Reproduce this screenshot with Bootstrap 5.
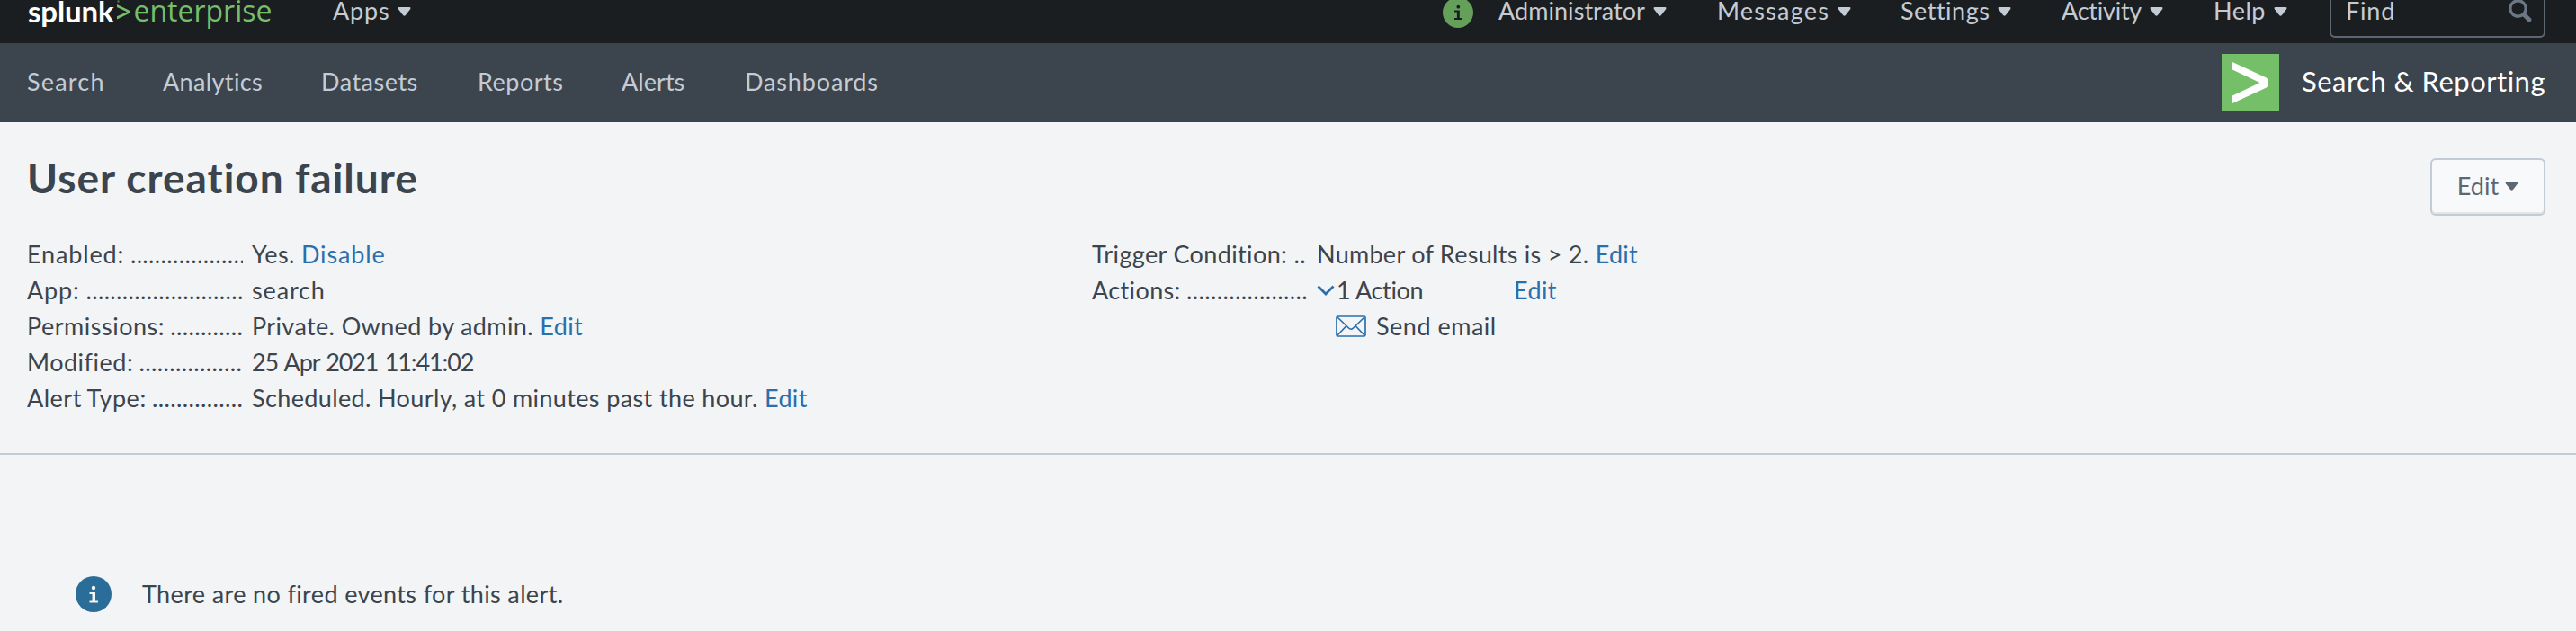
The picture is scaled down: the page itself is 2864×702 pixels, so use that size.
<!DOCTYPE html>
<html lang="en">
<head>
<meta charset="utf-8">
<title>User creation failure | Splunk</title>
<link href="https://cdn.jsdelivr.net/npm/bootstrap@5.3.0/dist/css/bootstrap.min.css" rel="stylesheet">
<style>
body{margin:0;background:#f2f4f5;color:#3c444d;font:27px/40px Lato,"Open Sans",sans-serif;letter-spacing:.37px;font-variant-ligatures:none;font-kerning:normal;height:702px;overflow:hidden;white-space:nowrap}
a{color:#2b6fad;text-decoration:none}
svg{display:block;flex:none}
.top-bar{height:48px;background:#1a1e21;color:#c3cbd4;overflow:hidden;padding:0 34px 0 31px}
.top-bar a,.app-bar nav a{color:#c3cbd4}
.top-line{height:40px;margin-top:-8px}
.logo{width:339px;height:40px;line-height:40px}
.logo b{color:#fff;font:700 33px/40px Lato,sans-serif;letter-spacing:-.15px}
.logo .prompt{width:17px;margin:0 2px 0 3px}
.logo .edition{color:#76bf69;font:400 32px/40px "Open Sans",sans-serif;letter-spacing:0}
.caret{width:15px;height:10px;margin-top:2px;fill:currentColor}
.menu-item{gap:9px}
.menus{display:grid;grid-template:40px / 62px 243px 204px 179px 169px 129px 240px}
.info-dot{margin-top:4px}
.find-box{height:60px;border:2px solid #5c6773;border-radius:6px;padding:0 12px 0 16px;margin:-10px 0}
.app-bar{height:88px;background:#3c444d;padding:0 34px 4px 30px}
.app-bar nav{display:grid;grid-template-columns:151px 176px 174px 160px 137px auto;padding-top:2px}
.app-title{color:#fff;font-size:31px;letter-spacing:.49px}
.app-icon{margin:4px 25px 0 0}
.page-head{padding:34px 34px 0 30px;height:127px}
h1{font:700 46px/56px Lato,sans-serif;letter-spacing:1px;margin:0}
.edit-btn{--bs-btn-color:#5c6773;--bs-btn-bg:#f7f9fa;--bs-btn-border-color:#c3cbd4;width:128px;height:64px;margin-top:6px;padding:0 0 3px;border-width:2px;border-radius:6px;box-shadow:inset 0 -2px #e1e6eb;font-size:27px;line-height:40px;letter-spacing:.1px}
.edit-btn .caret{margin:0 0 0 7px}
.details{border-bottom:2px solid #c3cbd4;height:243px;padding-left:30px}
.detail-list{width:1184px}
.term{width:240px;height:40px;overflow:hidden;margin-right:10px}
.term span{word-spacing:-1px}
.condition{letter-spacing:.28px}
.action-count{width:198px;letter-spacing:-.35px}
.action-count svg{margin-right:2px}
.action-edit{margin-left:21px}
.send-row{padding-left:271px;gap:11px}
.notice{padding:135px 0 0 84px}
.notice svg{margin-right:34px}
.k0{letter-spacing:.05px}.k6{letter-spacing:.5px}.k9{letter-spacing:.85px}.k11{letter-spacing:.8px}.k14{letter-spacing:1.2px}.kn{letter-spacing:-.25px}.kd{letter-spacing:-1.1px;word-spacing:1.500px}
</style>
</head>
<body>
<svg class="d-none"><symbol id="caret" viewBox="0 0 16 10" preserveAspectRatio="none"><path d="M2 0H14Q16.300 .3 15 2.200L9.500 9Q8 10.600 6.500 9L1 2.200Q-.3 .3 2 0Z"/></symbol></svg>
<header class="top-bar d-flex justify-content-between">
  <div class="top-line d-flex align-items-center">
    <a class="logo d-flex align-items-center" href="#"><b>splunk</b><svg class="prompt" height="24" viewBox="0 0 17 24"><path d="M1 5 16 12.200V14.200L1 21.500V18.300L12.200 13.200 1 8.100Z" fill="#76bf69"/><circle cx="2.500" cy="1.500" r="1.200" fill="#4f7f49"/></svg><span class="edition">enterprise</span></a>
    <a class="menu-item d-flex align-items-center k11" href="#">Apps<svg class="caret"><use href="#caret"/></svg></a>
  </div>
  <div class="menus top-line align-items-center">
    <svg class="info-dot" width="34" height="34" viewBox="0 0 34 34"><circle cx="17" cy="17" r="17" fill="#65a05a"/><path d="M13 14.500H18.800V23H21.300V25H13V23H15.900V16.500H13Z" fill="#1a1e21"/><circle cx="17.300" cy="10.700" r="1.900" fill="#1a1e21"/></svg>
    <a class="menu-item d-flex align-items-center k0" href="#">Administrator<svg class="caret"><use href="#caret"/></svg></a>
    <a class="menu-item d-flex align-items-center k14" href="#">Messages<svg class="caret"><use href="#caret"/></svg></a>
    <a class="menu-item d-flex align-items-center k6" href="#">Settings<svg class="caret"><use href="#caret"/></svg></a>
    <a class="menu-item d-flex align-items-center kn" href="#">Activity<svg class="caret"><use href="#caret"/></svg></a>
    <a class="menu-item d-flex align-items-center k6" href="#">Help<svg class="caret"><use href="#caret"/></svg></a>
    <div class="find-box d-flex align-items-center justify-content-between k11"><span>Find</span><svg width="28" height="28" viewBox="0 0 28 28" fill="none" stroke="#6b7785"><circle cx="11.500" cy="11.500" r="8.700" stroke-width="3.400"/><path d="M18.500 18.500 24 24" stroke-width="5" stroke-linecap="round"/></svg></div>
  </div>
</header>
<div class="app-bar d-flex align-items-center justify-content-between">
  <nav><a class="k14" href="#">Search</a><a href="#">Analytics</a><a class="k6" href="#">Datasets</a><a class="k6" href="#">Reports</a><a class="k0" href="#">Alerts</a><a class="k9" href="#">Dashboards</a></nav>
  <div class="app-title d-flex align-items-center"><svg class="app-icon" width="64" height="64" viewBox="0 0 64 64"><path d="M0 0H64V64H0Z" fill="#76bf69"/><path d="M12 9 52 27.500V36.500L12 55V46.500L42.500 32 12 17.500Z" fill="#fff"/></svg>Search &amp; Reporting</div>
</div>
<main>
  <div class="page-head d-flex justify-content-between align-items-start">
    <h1>User creation failure</h1>
    <button class="btn edit-btn d-flex align-items-center justify-content-center">Edit<svg class="caret"><use href="#caret"/></svg></button>
  </div>
  <section class="details d-flex">
    <div class="detail-list">
      <div class="d-flex"><div class="term"><span class="k9">Enabled: </span>...................</div><div>Yes. <a href="#" class="k9">Disable</a></div></div>
      <div class="d-flex"><div class="term"><span class="k9">App: </span>...........................</div><div class="k9">search</div></div>
      <div class="d-flex"><div class="term"><span class="k6">Permissions: </span>............</div><div>Private. Owned by admin. <a href="#">Edit</a></div></div>
      <div class="d-flex"><div class="term"><span class="k6">Modified: </span>..................</div><div class="kd">25 Apr 2021 11:41:02</div></div>
      <div class="d-flex"><div class="term"><span class="k6">Alert Type: </span>...............</div><div>Scheduled. Hourly, at 0 minutes past the hour. <a href="#">Edit</a></div></div>
    </div>
    <div>
      <div class="d-flex"><div class="term">Trigger Condition: ..</div><div class="condition">Number of Results is &gt; 2. <a href="#">Edit</a></div></div>
      <div class="d-flex"><div class="term"><span>Actions: </span>.....................</div><div class="action-count d-flex align-items-center"><svg width="20" height="12" viewBox="0 0 20 12"><path d="M1.500 1.500 10 10 18.500 1.500" fill="none" stroke="#2b6fad" stroke-width="2.800"/></svg>1 Action</div><div class="action-edit"><a href="#">Edit</a></div></div>
      <div class="send-row d-flex align-items-center"><svg width="34" height="24" viewBox="0 0 34 24" fill="none" stroke="#2b6fad" stroke-width="1.700"><rect x="1" y="1" width="32" height="22" rx="1.500"/><path d="M1.500 1.500 14.500 14Q17 16.500 19.500 14L32.500 1.500M1.500 22.500 12 11.500M32.500 22.500 22 11.500"/></svg><span class="k6">Send email</span></div>
    </div>
  </section>
  <div class="notice d-flex align-items-center"><svg width="40" height="40" viewBox="0 0 40 40"><circle cx="20" cy="20" r="20" fill="#2b6d99"/><path d="M15.500 18H22V27.500H25V29.500H15.500V27.500H18.500V20H15.500Z" fill="#f2f4f5"/><circle cx="20" cy="13" r="2.200" fill="#f2f4f5"/></svg>There are no fired events for this alert.</div>
</main>
<script src="https://cdn.jsdelivr.net/npm/bootstrap@5.3.0/dist/js/bootstrap.bundle.min.js"></script>
</body>
</html>
